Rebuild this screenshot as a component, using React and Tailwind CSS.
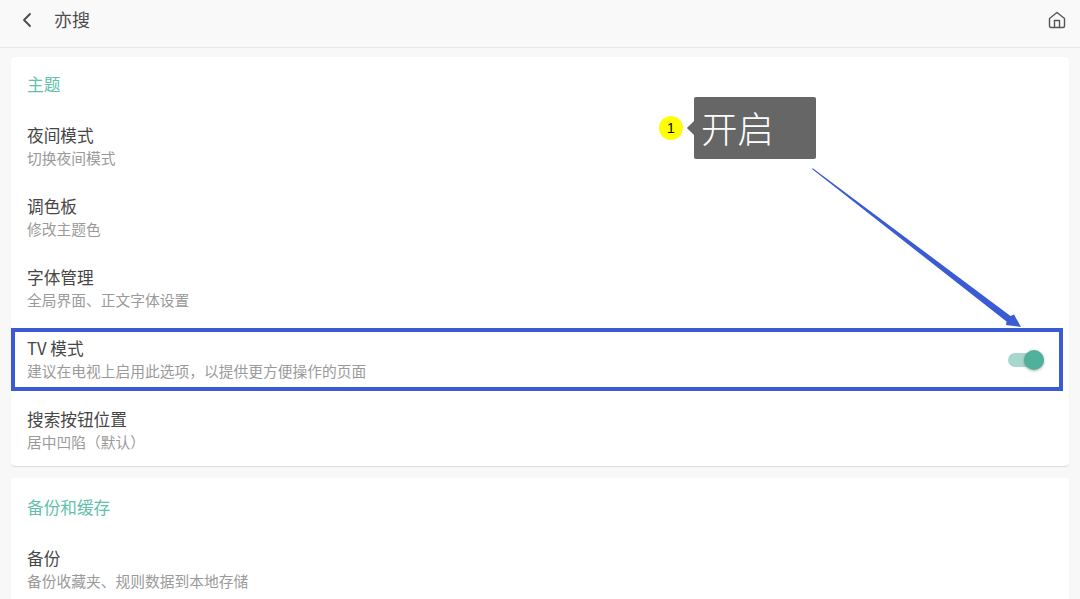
import React from 'react';
import { ChevronLeft } from 'lucide-react';

const font = 'font-["Noto_Sans_CJK_SC","Noto_Sans",sans-serif]';

const Row = ({ title, sub, children }) => (
    <div className="h-[71px] px-4 flex items-center justify-between">
        <div className="flex flex-col">
            <div className="pt-[1px] text-[16.67px] leading-[23px] text-[#464646]">{title}</div>
            <div className="text-[14.75px] leading-[22px] text-[#9a9a9a]">{sub}</div>
        </div>
        {children}
    </div>
);

const SectionTitle = ({ children }) => (
    <div className="h-[56px] pb-[2px] px-4 flex items-center text-[16.67px] text-[#62bfac]">{children}</div>
);

const Toggle = () => (
    <div className="relative mr-[9px] mt-[2px] w-[36px] h-[14px] rounded-full bg-[#a8d8cd]">
        <div className="absolute right-0 -top-[3px] w-[20px] h-[20px] rounded-full bg-[#4fb19c] shadow-[0_1px_3px_rgba(0,0,0,0.3)]"></div>
    </div>
);

const App = () => {
    return (
        <div className={`relative h-[599px] w-[1080px] overflow-hidden bg-[#f8f8f8] ${font}`}>
            {/* Top bar */}
            <div className="h-[48px] pb-[8px] flex items-center justify-between pl-[15px] pr-[13px] border-b border-[#e6e6e6] bg-[#f9f9f9]">
                <div className="flex items-center">
                    <ChevronLeft className="w-[24px] h-[24px] text-[#4a4a4a]" strokeWidth={1.8} />
                    <span className="ml-[15px] text-[18px] text-[#4c4c4c]">亦搜</span>
                </div>
                <svg width="20" height="20" viewBox="0 0 20 20" fill="none" stroke="#555555" strokeWidth="1.4" strokeLinejoin="round">
                    <path d="M2.5 8.5 L10 2.5 L17.5 8.5 V16 Q17.5 17.5 16 17.5 H4 Q2.5 17.5 2.5 16 Z" />
                    <path d="M7.5 17.5 V10.5 H12.5 V17.5" />
                </svg>
            </div>

            {/* Settings */}
            <div className="flex flex-col gap-3 px-[11px] pt-[9px]">
                <div className="bg-white rounded shadow-[0_1px_1px_rgba(0,0,0,0.12)] pb-[1px]">
                    <SectionTitle>主题</SectionTitle>
                    <div className="-mt-[3px]">
                        <Row title="夜间模式" sub="切换夜间模式" />
                        <Row title="调色板" sub="修改主题色" />
                        <Row title="字体管理" sub="全局界面、正文字体设置" />
                        <Row title="TV 模式" sub="建议在电视上启用此选项，以提供更方便操作的页面">
                            <Toggle />
                        </Row>
                        <Row title="搜索按钮位置" sub="居中凹陷（默认）" />
                    </div>
                </div>
                <div className="bg-white rounded shadow-[0_1px_1px_rgba(0,0,0,0.12)]">
                    <div className="pt-[2px]">
                        <SectionTitle>备份和缓存</SectionTitle>
                    </div>
                    <div className="-mt-[3px]">
                        <Row title="备份" sub="备份收藏夹、规则数据到本地存储" />
                    </div>
                </div>
            </div>

            {/* Annotation overlay */}
            <div className="absolute left-[11px] top-[328px] w-[1052px] h-[63px] border-[4px] border-[#3a5bd4]"></div>
            <div className="absolute left-[659px] top-[116px] w-[24px] h-[24px] rounded-full bg-[#ffff00] flex items-center justify-center text-[14px] text-black font-['Liberation_Sans',sans-serif]">1</div>
            <div className="absolute left-[689px] top-[123px] w-[10px] h-[10px] rotate-45 bg-[#666666]"></div>
            <div className="absolute left-[694px] top-[97px] w-[122px] h-[62px] rounded-[2px] bg-[#666666] pl-[7px] flex items-center text-[36.5px] font-light text-white">开启</div>
            <svg className="absolute left-[800px] top-[160px]" width="240" height="175" viewBox="0 0 240 175">
                <polygon points="12,9 12.8,8.2 210.5,156 214,154.5 221,167 206,165 206.5,161.5" fill="#3a5bd4" />
            </svg>
        </div>
    );
};

export default App;
